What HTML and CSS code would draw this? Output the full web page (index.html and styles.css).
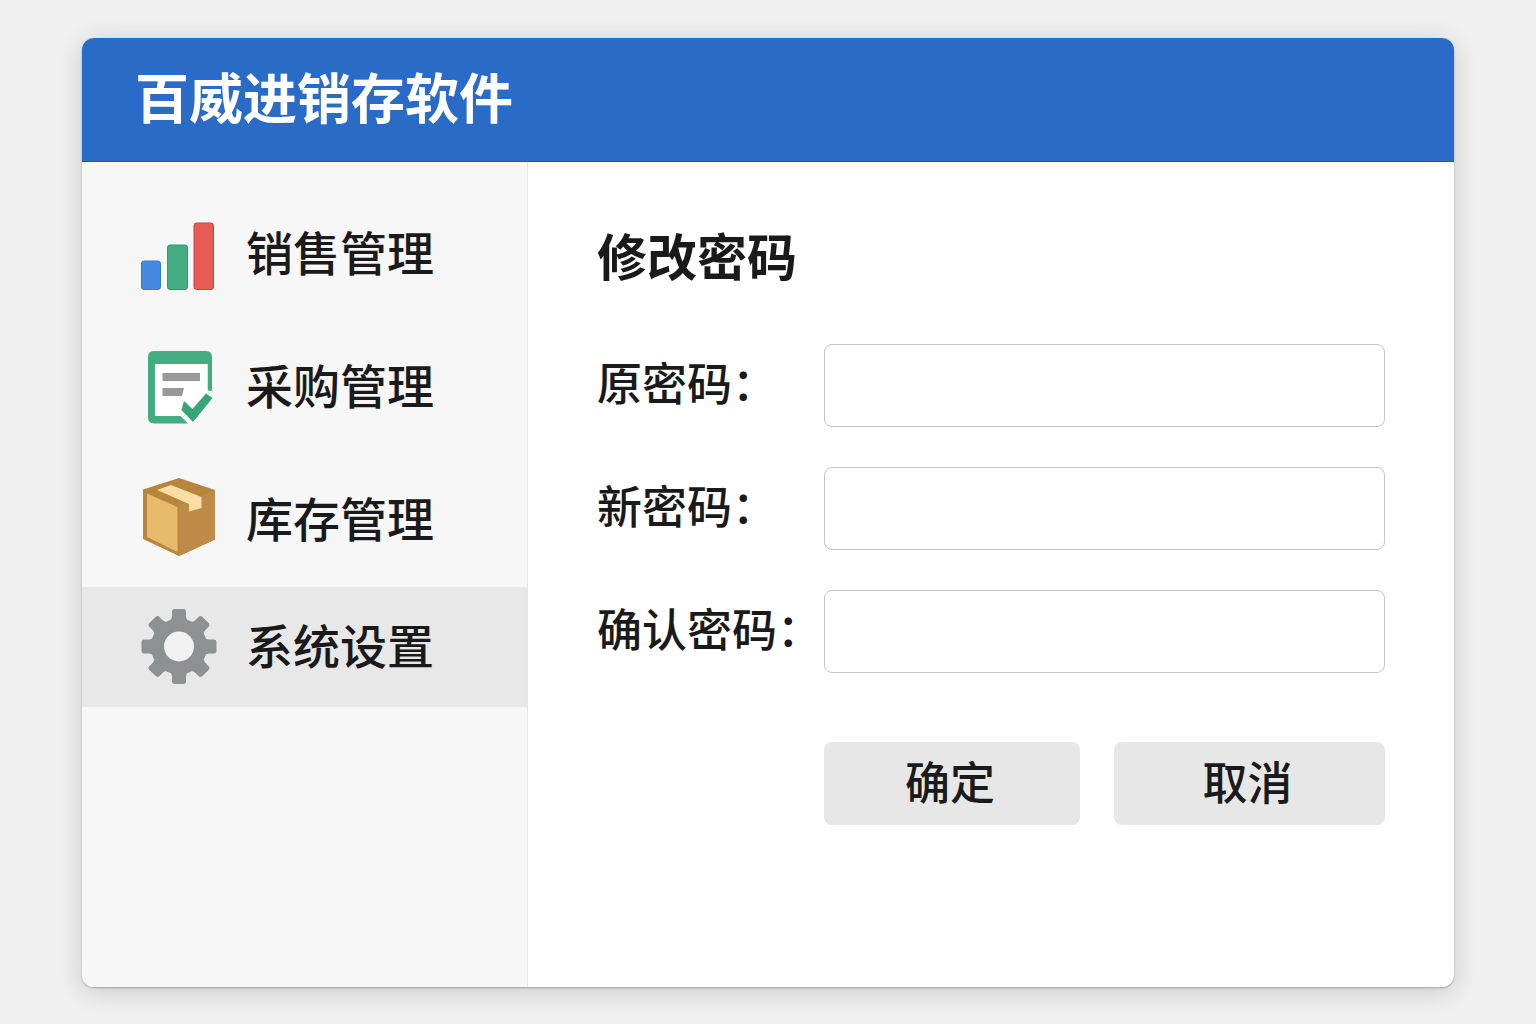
FILE: index.html
```html
<!DOCTYPE html>
<html lang="zh-CN">
<head>
  <meta charset="utf-8">
  <meta name="viewport" content="width=device-width, initial-scale=1">
  <title>百威进销存软件</title>
  <link rel="stylesheet" href="styles.css">
</head>
<body>
  <div class="window">
    <header class="titlebar">
      <h1 class="titlebar-name">百威进销存软件</h1>
    </header>
    <div class="workspace">
      <nav class="sidebar">
        <a class="menu-item" href="#sales">
          <svg class="menu-icon" viewBox="0 0 76 80" aria-hidden="true">
            <rect x="1.5" y="46" width="19" height="28.500" rx="2.500" fill="#458ae0" stroke="#347bd5"/>
            <rect x="27.500" y="30" width="20" height="44.500" rx="2.500" fill="#43ac82" stroke="#2c9b6f"/>
            <rect x="54" y="8" width="19.500" height="66.500" rx="2.500" fill="#e95b55" stroke="#d33e3b"/>
          </svg>
          <span>销售管理</span>
        </a>
        <a class="menu-item" href="#purchase">
          <svg class="menu-icon" viewBox="0 0 76 80" aria-hidden="true">
            <path d="M14 3H66Q72 3 72 9V43L67.500 42.500V16H15V68H40.500L48 75.500H14Q8 75.500 8 69V9Q8 3 14 3Z" fill="#41ad81"/>
            <path d="M15 16H67.500V43L50 62L42 55L40 61L46 68H15Z" fill="#fff"/>
            <path d="M22.500 25H60V33H22.500ZM22.500 40H44L42 48H22.500Z" fill="#999"/>
            <path d="M41.500 62L44 53L52.500 61L66 45.500L72.500 50L53 74Z" fill="#36a578"/>
          </svg>
          <span>采购管理</span>
        </a>
        <a class="menu-item" href="#stock">
          <svg class="menu-icon" viewBox="0 0 76 80" aria-hidden="true">
            <path d="M3 8.500L39 -3L75 9V58.500L39 75L3 58Z" fill="#b7853c"/>
            <path d="M39 24L75 9V58.500L39 75Z" fill="#bd8a47"/>
            <path d="M7 12.500L37.500 26V71L7 56Z" fill="#e8bb6c"/>
            <path d="M17 9L31 4L61.500 16V27L49 30.500V23Z" fill="#fbdea3"/>
          </svg>
          <span>库存管理</span>
        </a>
        <a class="menu-item active" href="#settings" aria-current="page">
          <svg class="menu-icon" viewBox="0 0 76 80" aria-hidden="true">
            <g transform="translate(39 39.500)" fill="#8d9191">
              <circle r="28"/>
              <g id="teeth">
                <path id="tooth" d="M-10 -25Q-7 -27 -7 -30V-35Q-7 -37.500 -4 -37.500H4Q7 -37.500 7 -35V-30Q7 -27 10 -25Z"/>
                <use href="#tooth" transform="rotate(45)"/>
                <use href="#tooth" transform="rotate(90)"/>
                <use href="#tooth" transform="rotate(135)"/>
              </g>
              <use href="#teeth" transform="rotate(180)"/>
              <circle r="15" fill="#f1f1f1"/>
            </g>
          </svg>
          <span>系统设置</span>
        </a>
      </nav>
      <main class="content">
        <h2 class="form-title">修改密码</h2>
        <form class="password-form">
          <label for="old-password">原密码：</label>
          <input id="old-password" type="password">
          <label for="new-password">新密码：</label>
          <input id="new-password" type="password">
          <label for="confirm-password">确认密码：</label>
          <input id="confirm-password" type="password">
          <div class="actions">
            <button type="submit">确定</button>
            <button type="button">取消</button>
          </div>
        </form>
      </main>
    </div>
  </div>
</body>
</html>
```
FILE: styles.css
```css
* {
  box-sizing: border-box;
}

body {
  margin: 0;
  min-height: 100vh;
  padding: 38px 82px 37px;
  display: flex;
  background: #f0f0f0;
  color: #1a1a1a;
  font-family: "Noto Sans CJK SC", "Noto Sans", sans-serif;
  font-weight: 500;
}

.window {
  flex: 1;
  min-width: 0;
  display: flex;
  flex-direction: column;
  border-radius: 12px;
  background: #fff;
  box-shadow: 0 1px 2px rgba(0, 0, 0, 0.25), 0 5px 26px rgba(0, 0, 0, 0.16);
  overflow: hidden;
}

.titlebar {
  height: 124px;
  padding: 0 53px 8px;
  display: flex;
  align-items: center;
  background: #2a6bc8;
  border-bottom: 1px solid #1457b4;
}

.titlebar-name {
  margin: 0;
  color: #fff;
  font-size: 54px;
  line-height: 64px;
  font-weight: 700;
}

.workspace {
  flex: 1;
  display: grid;
  grid-template-columns: 446px 1fr;
}

.sidebar {
  padding-top: 26px;
  background: #f7f7f7;
  border-right: 1px solid #e6e6e6;
}

.menu-item {
  height: 133px;
  padding-left: 58px;
  display: flex;
  align-items: center;
  gap: 30px;
  color: inherit;
  font-size: 47px;
  line-height: 56px;
  text-decoration: none;
}

.menu-item span {
  padding-bottom: 7px;
}

.menu-item.active {
  height: 120px;
  background: #e8e8e8;
}

.menu-icon {
  flex: none;
  width: 76px;
  height: 80px;
  overflow: visible;
}

.content {
  padding: 62px 69px;
}

.form-title {
  margin: 0 0 60px;
  font-size: 50px;
  line-height: 60px;
  font-weight: 700;
}

.password-form {
  display: grid;
  grid-template-columns: 227px 1fr;
  row-gap: 40px;
  align-items: center;
}

.password-form label {
  padding-bottom: 7px;
  font-size: 45px;
  line-height: 56px;
  white-space: nowrap;
}

.password-form input {
  width: 100%;
  height: 83px;
  padding: 0 20px;
  border: 1px solid #c4c4c4;
  border-radius: 8px;
  background: #fff;
  font: inherit;
  font-size: 45px;
}

.actions {
  grid-column: 2;
  margin-top: 29px;
  display: grid;
  grid-template-columns: 256fr 271fr;
  gap: 34px;
}

.actions button {
  height: 83px;
  padding: 0 4px 5px 0;
  border: 0;
  border-radius: 8px;
  background: #e7e7e7;
  color: inherit;
  font: inherit;
  font-size: 45px;
  line-height: 56px;
}
```
